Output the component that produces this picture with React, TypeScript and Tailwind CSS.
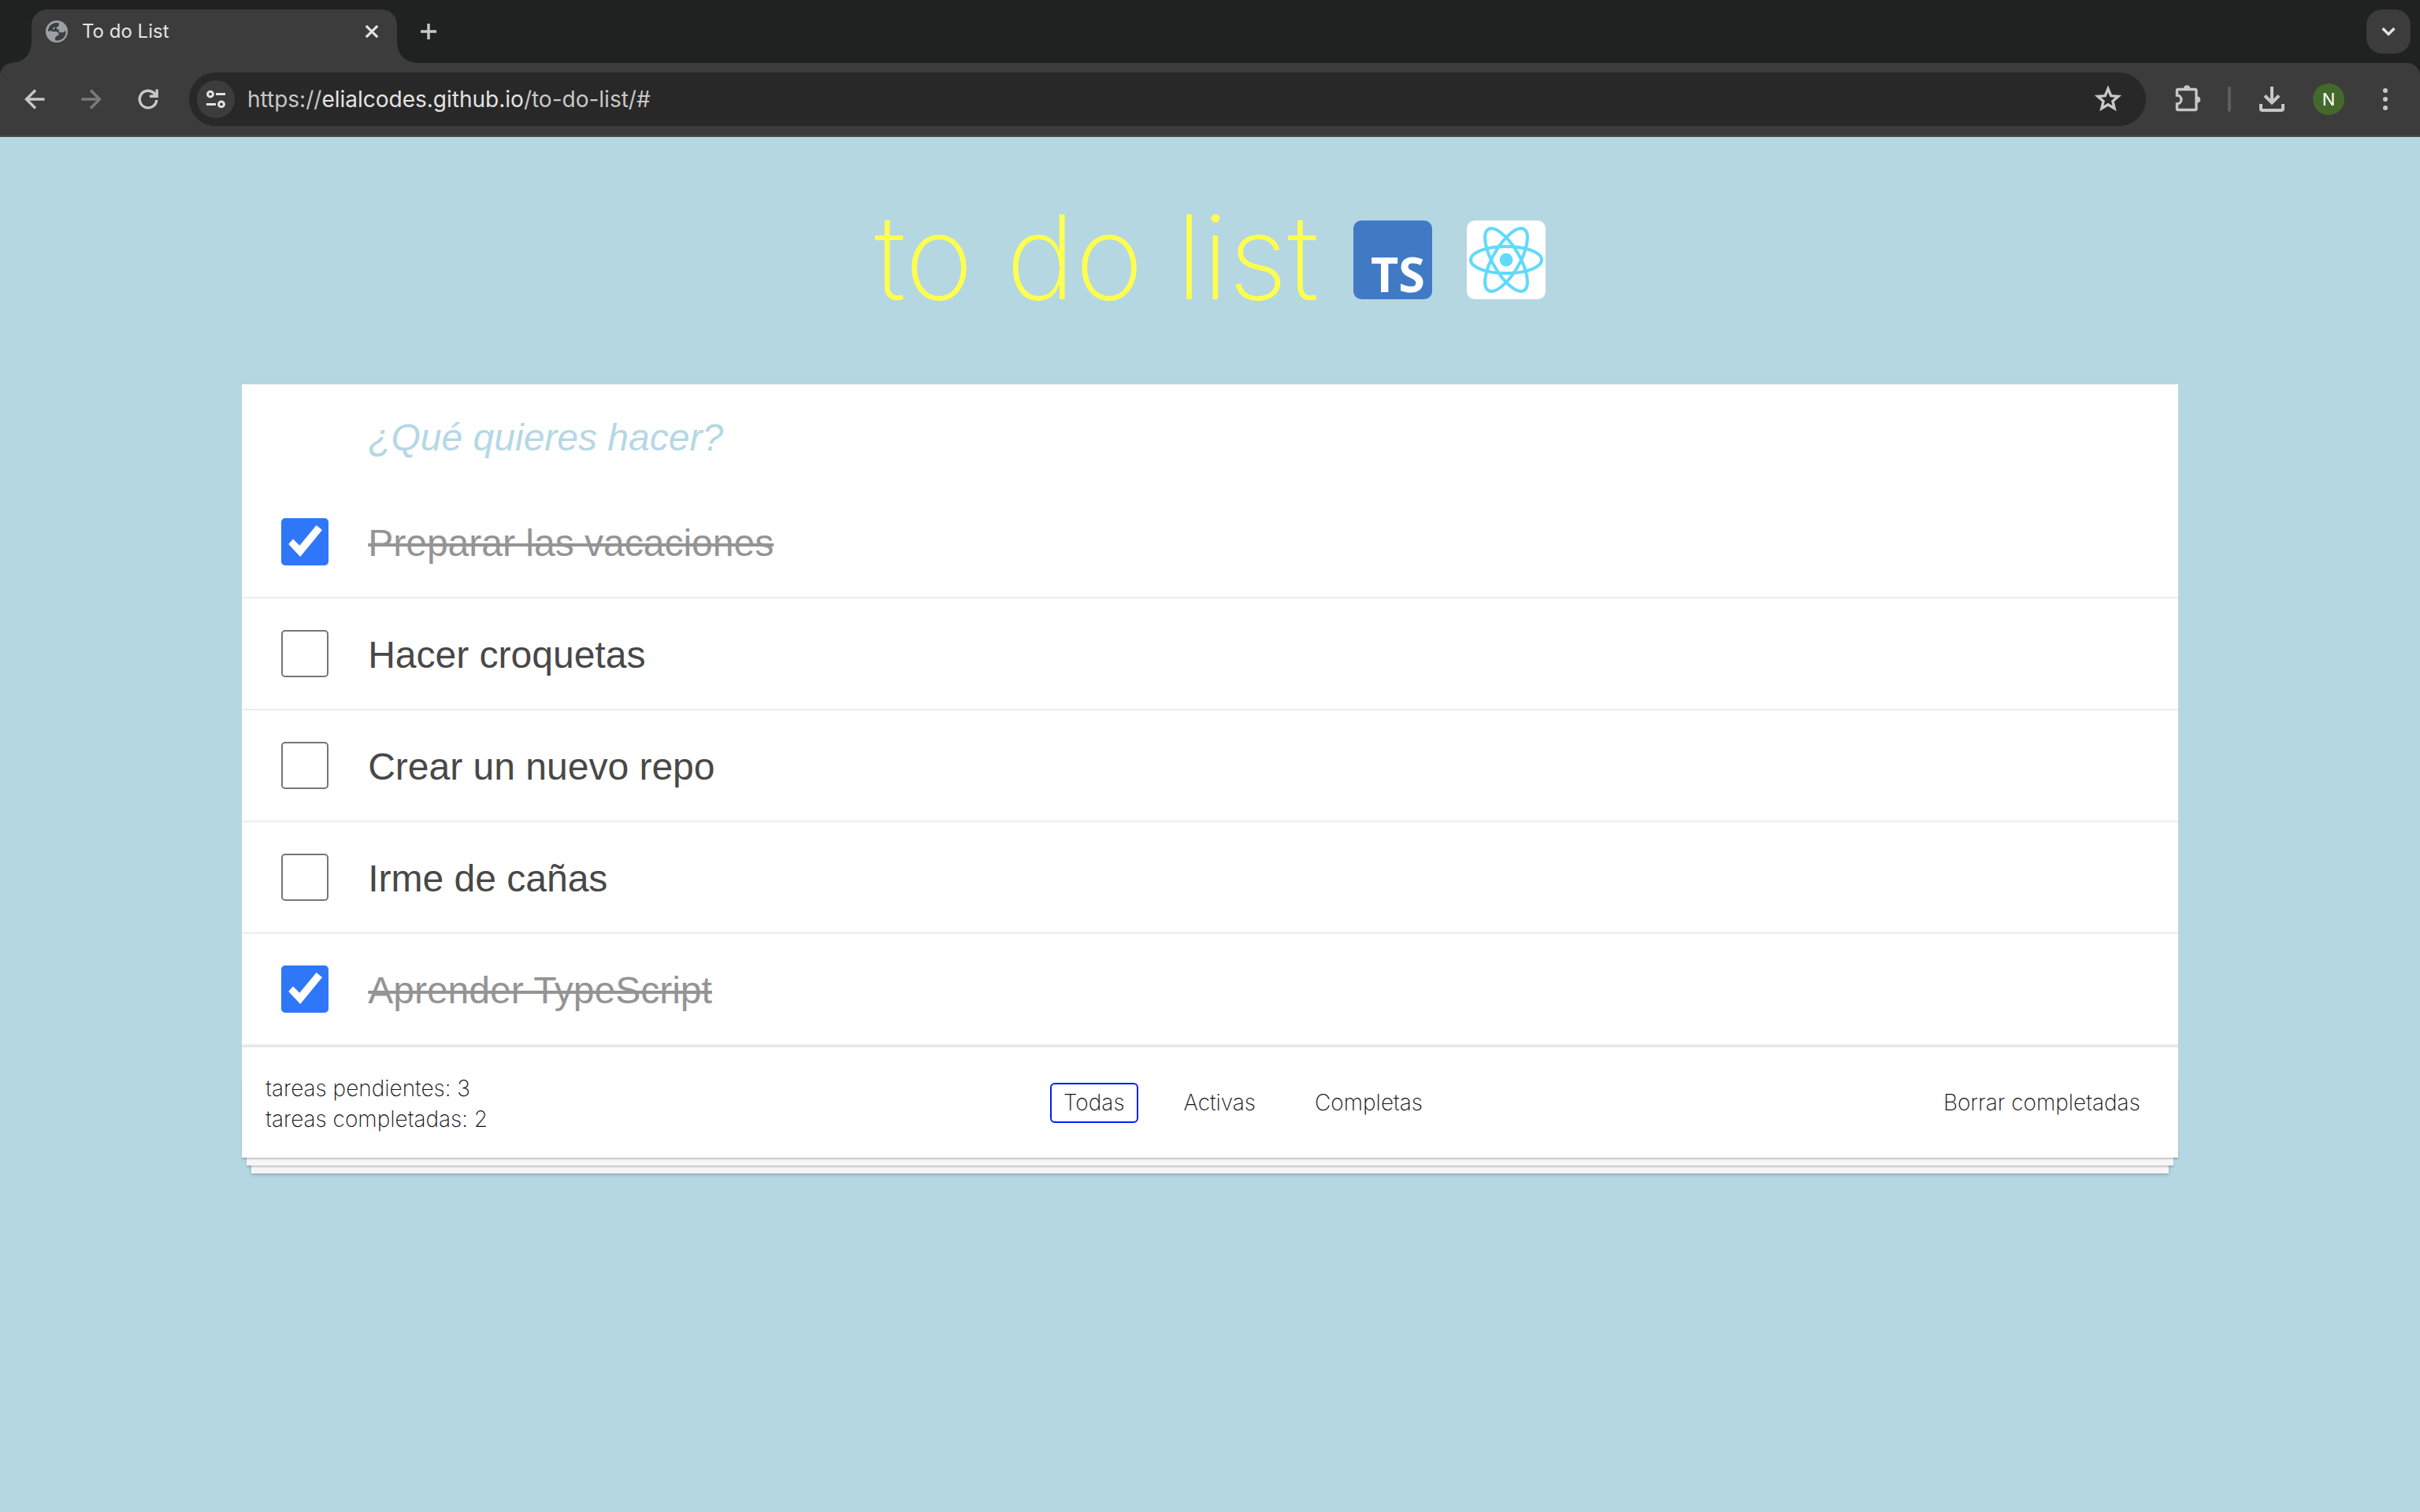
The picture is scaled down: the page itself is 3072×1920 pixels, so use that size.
import React, { useState } from "react";

type Task = { id: number; title: string; done: boolean };
type Filter = "Todas" | "Activas" | "Completas";

const INITIAL_TASKS: Task[] = [
  { id: 1, title: "Preparar las vacaciones", done: true },
  { id: 2, title: "Hacer croquetas", done: false },
  { id: 3, title: "Crear un nuevo repo", done: false },
  { id: 4, title: "Irme de cañas", done: false },
  { id: 5, title: "Aprender TypeScript", done: true },
];

const FILTERS: Filter[] = ["Todas", "Activas", "Completas"];

function GlobeIcon() {
  return (
    <svg viewBox="0 0 84 84" className="size-7 shrink-0" aria-hidden="true">
      <circle cx="42" cy="42" r="42" fill="#9aa0a6" />
      <path
        d="M9 42C9 25 21 11 38 9L50 10V17C50 22 46 25 42 25H34V30C34 34 31 36 26 36H22V42H38C45 42 50 47 50 52V56H43V60C40 60 36 64 36 68V76C50 78 66 72 73 59C77 51 77 44 75 38C72 43 67 46 60 46H58C52 46 50 42 50 38V34H42V26H28V36Z"
        fill="#3c3c3c"
      />
    </svg>
  );
}

function BackIcon() {
  return (
    <svg viewBox="0 0 32 32" className="size-8" fill="none" stroke="currentColor" strokeWidth="3.4" aria-hidden="true">
      <path d="M28.500 16H5.500M17 4.500L5.500 16L17 27.500" />
    </svg>
  );
}

function ForwardIcon() {
  return (
    <svg viewBox="0 0 32 32" className="size-8" fill="none" stroke="currentColor" strokeWidth="3.4" aria-hidden="true">
      <path d="M3.500 16H26.500M15 4.500L26.500 16L15 27.500" />
    </svg>
  );
}

function ReloadIcon() {
  return (
    <svg viewBox="0 0 32 32" className="size-8" fill="none" stroke="currentColor" strokeWidth="3.400" aria-hidden="true">
      <path d="M26.800 17A10.800 10.800 0 1 1 23.600 8.300L26 11" />
      <path d="M27.200 3.500V12.300H18" />
      <path d="M21 12L27 6V12Z" fill="currentColor" stroke="none" />
    </svg>
  );
}

function SiteInfoIcon() {
  return (
    <svg viewBox="0 0 24 24" className="size-6" fill="none" stroke="#e3e3e3" strokeWidth="3" aria-hidden="true">
      <circle cx="5" cy="5.600" r="3.400" />
      <path d="M12 5.500H24M0 18.500H12" />
      <circle cx="19" cy="18.400" r="3.400" />
    </svg>
  );
}

function StarIcon() {
  return (
    <svg viewBox="0 0 36 36" className="size-9" fill="none" stroke="currentColor" strokeWidth="3.400" aria-hidden="true">
      <path d="M18 4.600L21.700 13.600L31 14.400L23.900 20.500L26.100 29.700L18 24.800L9.900 29.700L12.100 20.500L5 14.400L14.300 13.600Z" />
    </svg>
  );
}

function PuzzleIcon() {
  return (
    <svg viewBox="0 0 36 36" className="size-9" aria-hidden="true">
      <path
        d="M5.500 5.500H26.500Q28 5.500 28 7V30Q28 31.500 26.500 31.500H5Q3.500 31.500 3.500 30V24A5.500 5.500 0 0 0 3.500 13V7Q3.500 5.500 5 5.500Z"
        fill="none"
        stroke="currentColor"
        strokeWidth="3.400"
      />
      <path d="M12 4.500A4.200 4.200 0 0 1 20.400 4.500Z" fill="currentColor" />
      <path d="M29 14.200A4.300 4.300 0 0 1 29 22.800Z" fill="currentColor" />
    </svg>
  );
}

function DownloadIcon() {
  return (
    <svg viewBox="0 0 36 36" className="size-9" fill="none" stroke="currentColor" strokeWidth="4" aria-hidden="true">
      <path d="M18 2V22M9 13.500L18 22.500L27 13.500" />
      <path d="M4 24V30Q4 32 6 32H30Q32 32 32 30V24" />
    </svg>
  );
}

function TypeScriptLogo() {
  return (
    <svg viewBox="0 0 100 100" className="size-[100px] shrink-0" overflow="visible" role="img" aria-label="TypeScript">
      <rect width="100" height="100" rx="10" fill="#417ac4" />
      <text x="22" y="91" fill="#ffffff" fontFamily="'Open Sans', sans-serif" fontWeight="700" fontSize="61">
        TS
      </text>
    </svg>
  );
}

function ReactLogo() {
  return (
    <svg viewBox="0 0 100 100" className="size-[100px] shrink-0" role="img" aria-label="React">
      <rect width="100" height="100" rx="10" fill="#ffffff" />
      <circle cx="50" cy="50" r="8.400" fill="#61dafb" />
      <g fill="none" stroke="#61dafb" strokeWidth="4">
        <ellipse cx="50" cy="50" rx="45" ry="17" />
        <ellipse cx="50" cy="50" rx="45" ry="17" transform="rotate(60 50 50)" />
        <ellipse cx="50" cy="50" rx="45" ry="17" transform="rotate(120 50 50)" />
      </g>
    </svg>
  );
}

function BrowserBar() {
  return (
    <header className="bg-[#202221] font-['Inter',sans-serif]">
      <div className="flex h-20 items-end pr-3 pl-10">
        <div className="relative flex h-[68px] w-[464px] items-start rounded-t-[20px] bg-[#3c3c3c] px-[18px] text-[#e3e3e3]">
          <span className="absolute bottom-0 -left-6 size-6 bg-[radial-gradient(circle_at_0_0,transparent_23px,#3c3c3c_24px)]" />
          <span className="absolute -right-6 bottom-0 size-6 bg-[radial-gradient(circle_at_100%_0,transparent_23px,#3c3c3c_24px)]" />
          <div className="flex h-14 w-full items-center">
            <GlobeIcon />
            <span className="ml-[18px] flex-1 text-[24px] leading-8">To do List</span>
            <button type="button" aria-label="Cerrar pestaña">
              <svg viewBox="0 0 28 28" className="size-7" stroke="currentColor" strokeWidth="3.200" aria-hidden="true">
                <path d="M6.800 6.800L21.200 21.200M21.200 6.800L6.800 21.200" />
              </svg>
            </button>
          </div>
        </div>
        <button type="button" aria-label="Nueva pestaña" className="flex h-[68px] items-start pl-6 text-[#c7c7c7]">
          <svg viewBox="0 0 32 56" className="h-14 w-8" stroke="currentColor" strokeWidth="3.400" aria-hidden="true">
            <path d="M16 18V38M6 28H26" />
          </svg>
        </button>
        <button
          type="button"
          aria-label="Buscar pestañas"
          className="mb-3 ml-auto flex size-14 items-center justify-center rounded-[20px] bg-[#3c3c3c] text-[#e3e3e3]"
        >
          <svg viewBox="0 0 24 24" className="size-6" fill="none" stroke="currentColor" strokeWidth="3.400" aria-hidden="true">
            <path d="M4.600 8L12 15.400L19.400 8" />
          </svg>
        </button>
      </div>

      <div className="flex h-[94px] items-center rounded-t-[16px] border-b-2 border-[#4a4a4c] bg-[#3c3c3c] pr-8 pl-7 text-[#c7c7c7]">
        <nav className="flex items-center gap-10" aria-label="Navegación">
          <button type="button" aria-label="Atrás">
            <BackIcon />
          </button>
          <button type="button" aria-label="Adelante" className="text-[#7a7a7a]">
            <ForwardIcon />
          </button>
          <button type="button" aria-label="Recargar">
            <ReloadIcon />
          </button>
        </nav>
        <div className="ml-9 flex h-[68px] flex-1 items-center rounded-full bg-[#282828] pr-[30px] pl-2.5">
          <button
            type="button"
            aria-label="Información del sitio"
            className="flex size-12 items-center justify-center rounded-full bg-[#3c3c3c]"
          >
            <SiteInfoIcon />
          </button>
          <div role="textbox" aria-label="Dirección" className="ml-4 flex-1 text-[28px] leading-9">
            https://<span className="text-[#e3e3e3]">elialcodes.github.io</span>/to-do-list/#
          </div>
          <button type="button" aria-label="Añadir a marcadores">
            <StarIcon />
          </button>
        </div>
        <button type="button" aria-label="Extensiones" className="ml-9">
          <PuzzleIcon />
        </button>
        <span className="ml-8 h-8 w-1 rounded-full bg-[#5f5f5f]" />
        <button type="button" aria-label="Descargas" className="ml-[34px]">
          <DownloadIcon />
        </button>
        <button
          type="button"
          aria-label="Perfil"
          className="ml-[34px] flex size-10 items-center justify-center rounded-full bg-[#43692b] text-[22px] leading-none text-white"
        >
          N
        </button>
        <button type="button" aria-label="Menú" className="ml-10">
          <svg viewBox="0 0 24 32" className="h-8 w-6" fill="currentColor" aria-hidden="true">
            <circle cx="12" cy="5" r="3" />
            <circle cx="12" cy="16" r="3" />
            <circle cx="12" cy="27" r="3" />
          </svg>
        </button>
      </div>
    </header>
  );
}

function TaskRow({ task, onToggle }: { task: Task; onToggle: () => void }) {
  const inputId = `task-${task.id}`;
  return (
    <li className="flex items-center border-b-2 border-[#ededed] px-[50px] py-10">
      <span className="grid size-[60px] shrink-0">
        <input
          id={inputId}
          type="checkbox"
          checked={task.done}
          onChange={onToggle}
          className="peer col-start-1 row-start-1 size-[60px] appearance-none rounded-[5px] border-2 border-[#767676] bg-white checked:border-[#2f77f9] checked:bg-[#2f77f9]"
        />
        <svg
          viewBox="0 0 60 60"
          className="pointer-events-none invisible col-start-1 row-start-1 size-[60px] peer-checked:visible"
          aria-hidden="true"
        >
          <path d="M9.200 33L15 26.500L23.300 34.700L44.600 9L52 15L24.200 49Z" fill="#ffffff" />
        </svg>
      </span>
      <label
        htmlFor={inputId}
        className={
          task.done
            ? "ml-[50px] pt-1 text-[48px] leading-[56px] text-[#949494] line-through decoration-4"
            : "ml-[50px] pt-1 text-[48px] leading-[56px] text-[#484848]"
        }
      >
        {task.title}
      </label>
    </li>
  );
}

export default function App() {
  const [tasks, setTasks] = useState<Task[]>(INITIAL_TASKS);
  const [filter, setFilter] = useState<Filter>("Todas");
  const [draft, setDraft] = useState("");

  const pending = tasks.filter((t) => !t.done).length;
  const completed = tasks.length - pending;
  const visible = tasks.filter((t) => filter === "Todas" || (filter === "Completas") === t.done);

  const toggle = (id: number) => setTasks(tasks.map((t) => (t.id === id ? { ...t, done: !t.done } : t)));

  const addTask = (event: React.FormEvent) => {
    event.preventDefault();
    if (!draft.trim()) return;
    setTasks([...tasks, { id: Date.now(), title: draft.trim(), done: false }]);
    setDraft("");
  };

  return (
    <div className="flex min-h-screen flex-col bg-[#b5d7e2]">
      <BrowserBar />

      <div className="flex items-baseline justify-center gap-11 pt-[78px] pb-[86px]">
        <h1 className="font-['Inter',sans-serif] text-[148px] leading-[150px] font-[150] text-[#ffff4f]">to do list</h1>
        <TypeScriptLogo />
        <ReactLogo />
      </div>

      <main className="mx-auto w-4/5 bg-white font-['Liberation_Sans',Arial,sans-serif]">
        <form onSubmit={addTask}>
          <input
            type="text"
            aria-label="Nueva tarea"
            value={draft}
            onChange={(e) => setDraft(e.target.value)}
            placeholder="¿Qué quieres hacer?"
            className="block h-[130px] w-full bg-transparent pt-1 pr-8 pl-40 text-[48px] text-[#484848] outline-none placeholder:text-[#b5d8e4] placeholder:italic"
          />
        </form>

        <ul>
          {visible.map((task) => (
            <TaskRow key={task.id} task={task} onToggle={() => toggle(task.id)} />
          ))}
        </ul>

        <footer className="relative flex min-h-[142px] items-center justify-between border-t-2 border-[#e6e6e6] px-[30px] font-['Inter',sans-serif] text-[28px] leading-[39px] font-[150] text-[#111111]">
          <span className="pointer-events-none absolute inset-x-0 bottom-0 h-[100px] shadow-[0_2px_2px_rgba(0,0,0,0.2),0_16px_0_-6px_#f6f6f6,0_18px_2px_-6px_rgba(0,0,0,0.2),0_32px_0_-12px_#f6f6f6,0_34px_4px_-12px_rgba(0,0,0,0.2)]" />
          <div className="pt-1">
            <p>tareas pendientes: {pending}</p>
            <p>tareas completadas: {completed}</p>
          </div>
          <ul className="flex items-center gap-[41px] pl-22">
            {FILTERS.map((name) => (
              <li key={name} className="flex">
                <button
                  type="button"
                  onClick={() => setFilter(name)}
                  className={
                    name === filter
                      ? "rounded-[6px] border-2 border-[#001eff] px-[15px] py-1"
                      : "rounded-[6px] border-2 border-transparent px-[15px] py-1"
                  }
                >
                  {name}
                </button>
              </li>
            ))}
          </ul>
          <button type="button" onClick={() => setTasks(tasks.filter((t) => !t.done))} className="px-[18px]">
            Borrar completadas
          </button>
        </footer>
      </main>
    </div>
  );
}
